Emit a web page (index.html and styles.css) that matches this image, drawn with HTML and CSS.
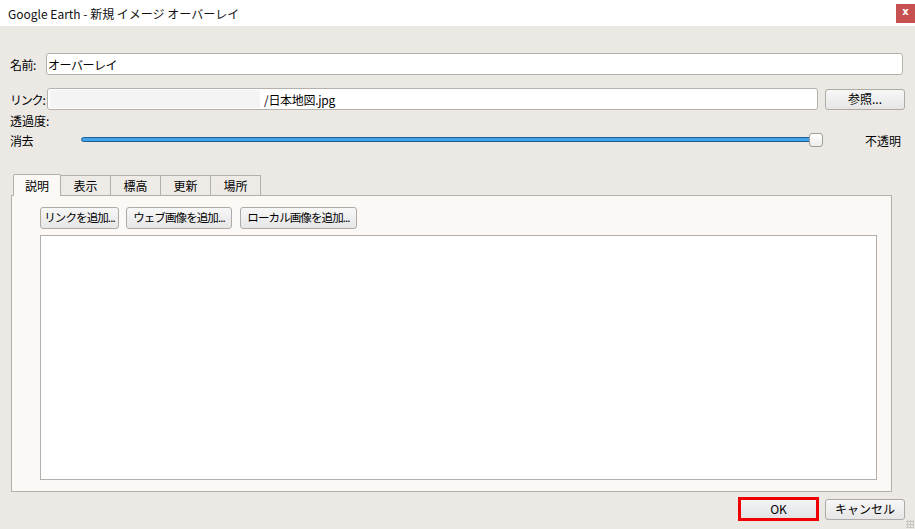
FILE: index.html
```html
<!DOCTYPE html>
<html lang="ja">
<head>
<meta charset="utf-8">
<link rel="stylesheet" href="styles.css">
</head>
<body>
<div class="window">
  <div class="titlebar">
    <span class="title">Google Earth - 新規 イメージ オーバーレイ</span>
    <span class="close">x</span>
  </div>
  <div class="content">
    <div class="row name-row">
      <label class="lbl name-lbl">名前:</label>
      <div class="input name-input">オーバーレイ</div>
    </div>
    <div class="row link-row">
      <label class="lbl link-lbl">リンク:</label>
      <div class="input link-input"><span class="blur"></span><span class="path">/日本地図.jpg</span></div>
      <button class="btn browse">参照...</button>
    </div>
    <div class="opacity-label">透過度:</div>
    <div class="row slider-row">
      <span class="lbl">消去</span>
      <div class="slider"><div class="track"></div><div class="thumb"></div></div>
      <span class="opaque">不透明</span>
    </div>
    <div class="tabs">
      <div class="tab active">説明</div>
      <div class="tab">表示</div>
      <div class="tab">標高</div>
      <div class="tab">更新</div>
      <div class="tab">場所</div>
    </div>
    <div class="panel">
      <div class="toolbar">
        <button class="btn small b1">リンクを追加...</button>
        <button class="btn small b2">ウェブ画像を追加...</button>
        <button class="btn small b3">ローカル画像を追加...</button>
      </div>
      <div class="textarea"></div>
    </div>
    <div class="footer">
      <button class="btn ok">OK</button>
      <button class="btn cancel">キャンセル</button>
    </div>
  </div>
  <div class="grip"></div>
</div>
</body>
</html>
```
FILE: styles.css
```css
* { box-sizing: border-box; }
html, body { margin: 0; padding: 0; }
body {
  width: 915px;
  height: 529px;
  overflow: hidden;
  font-family: "Noto Sans CJK JP", "Noto Sans", sans-serif;
  font-size: 12px;
  color: #000;
  background: #ece9e5;
}
.window { position: relative; width: 915px; height: 529px; display: flex; flex-direction: column; }
.titlebar {
  height: 26px;
  background: #fff;
  display: flex;
  align-items: center;
  justify-content: space-between;
  padding-left: 8px;
}
.title { font-family: "Segoe UI", "Noto Sans CJK JP", "Noto Sans", sans-serif; font-size: 12px; color: #111; }
.close {
  width: 19px; height: 19px;
  background: #c75050;
  color: #fff;
  font-family: "DejaVu Sans", sans-serif;
  font-weight: bold;
  font-size: 10px;
  display: flex; align-items: center; justify-content: center;
  line-height: 1;
  padding-bottom: 2px;
}
.content { flex: 1; display: flex; flex-direction: column; padding: 27px 10px 0 10px; }
.row { display: flex; align-items: center; }
.lbl { white-space: nowrap; letter-spacing: -0.5px; flex-shrink: 0; }
.name-lbl { width: 36px; }
.link-lbl { width: 37px; letter-spacing: -1.2px; }
.input {
  height: 22px;
  background: #fff;
  border: 1px solid #b5b2ae;
  border-radius: 3px;
  display: flex; align-items: center;
  white-space: nowrap;
  overflow: hidden;
}
.name-input { flex: 1; margin-right: 2px; padding-left: 1px; letter-spacing: -0.5px; }
.link-row { margin-top: 13px; }
.link-input { width: 771px; padding-left: 2px; }
.blur { width: 210px; height: 18px; background: #f4f4f4; margin-right: 4px; flex-shrink: 0; }
.path { letter-spacing: -0.3px; }
.btn {
  font-family: "Noto Sans CJK JP", "Noto Sans", sans-serif;
  font-size: 12px;
  color: #000;
  background: linear-gradient(#f7f7f7, #e6e6e6);
  border: 1px solid #aeaba7;
  border-radius: 3px;
  padding: 0;
  display: flex; align-items: center; justify-content: center;
  line-height: 1;
  white-space: nowrap;
}
.browse { width: 80px; height: 21px; margin-left: 7px; }
.opacity-label { margin-top: 3px; line-height: 16px; }
.slider-row { height: 22px; }
.slider { position: relative; width: 742px; height: 16px; margin-left: 48px; }
.track {
  position: absolute; left: 0; right: 0; top: 5px; height: 5px;
  background: #44a3e6;
  border: 1px solid #1c5f94;
  border-radius: 3px;
}
.thumb {
  position: absolute; right: 0; top: 1px;
  width: 14px; height: 14px;
  background: linear-gradient(#ffffff, #ececec);
  border: 1px solid #a09c98;
  border-radius: 3px;
}
.opaque { margin-left: 42px; }
.tabs { display: flex; margin-top: 22px; margin-left: 3px; height: 22px; align-items: flex-end; }
.tab {
  width: 50px; height: 20px;
  background: #eeebe7;
  border: 1px solid #b3afab;
  border-bottom: none;
  border-left: none;
  display: flex; align-items: center; justify-content: center;
}
.tab.active {
  width: 48px; height: 22px;
  background: #fbf8f5;
  border-left: 1px solid #b3afab;
  border-radius: 2px 2px 0 0;
  margin-bottom: -1px;
  position: relative; z-index: 1;
}
.panel {
  margin-left: 1px;
  width: 881px;
  height: 297px;
  background: #fbf8f5;
  border: 1px solid #b3afab;
  display: flex; flex-direction: column;
  padding: 11px 14px 11px 28px;
}
.toolbar { display: flex; }
.small { height: 22px; letter-spacing: -0.9px; font-size: 11.5px; }
.b1 { width: 79px; }
.b2 { width: 106px; margin-left: 7px; }
.b3 { width: 117px; margin-left: 8px; }
.textarea { flex: 1; margin-top: 6px; background: #fff; border: 1px solid #b3afab; }
.footer { display: flex; justify-content: flex-end; gap: 6px; margin-top: 5px; align-items: center; }
.ok { width: 81px; height: 24px; border: 3px solid #ee0000; border-radius: 0; background: linear-gradient(#f3f4f5, #e1e3e5); }
.cancel { width: 80px; height: 21px; }
.grip {
  position: absolute; right: 1px; bottom: 1px; width: 8px; height: 8px;
  background-image: radial-gradient(circle, #c9c5c1 1px, transparent 1.2px);
  background-size: 3px 3px;
}
```
